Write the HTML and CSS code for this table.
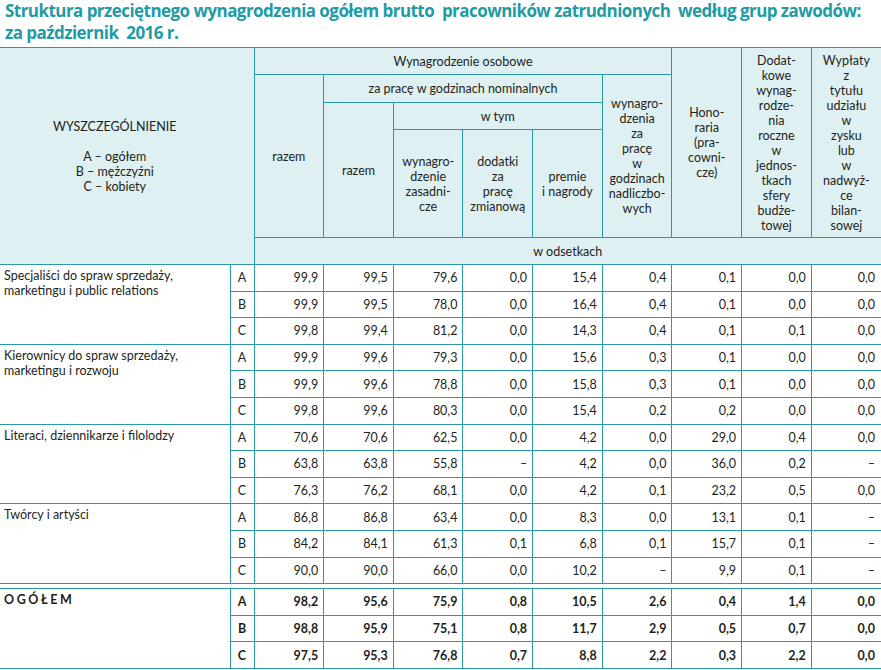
FILE: index.html
```html
<!DOCTYPE html>
<html lang="pl">
<head>
<meta charset="utf-8">
<title>Struktura przeciętnego wynagrodzenia</title>
<link rel="stylesheet" href="styles.css">
</head>
<body>
<h1 class="title">Struktura przeciętnego wynagrodzenia ogółem brutto&nbsp; pracowników zatrudnionych&nbsp; według grup zawodów:<br>za październik&nbsp; 2016 r.</h1>
<table class="tbl">
  <colgroup>
    <col class="c-label"><col class="c-abc">
    <col class="c-num"><col class="c-num"><col class="c-num"><col class="c-num"><col class="c-num"><col class="c-num"><col class="c-num"><col class="c-num"><col class="c-num">
  </colgroup>
  <thead>
    <tr class="h1">
      <th class="lead" colspan="2" rowspan="5">WYSZCZEGÓLNIENIE<br><br>A – ogółem<br>B – mężczyźni<br>C – kobiety</th>
      <th colspan="6">Wynagrodzenie osobowe</th>
      <th rowspan="4">Hono-<br>raria<br>(pra-<br>cowni-<br>cze)</th>
      <th rowspan="4">Dodat-<br>kowe<br>wynag-<br>rodze-<br>nia<br>roczne<br>w<br>jednos-<br>tkach<br>sfery<br>budże-<br>towej</th>
      <th rowspan="4" class="last">Wypłaty<br>z<br>tytułu<br>udziału<br>w<br>zysku<br>lub<br>w<br>nadwyż-<br>ce<br>bilan-<br>sowej</th>
    </tr>
    <tr class="h2">
      <th rowspan="3">razem</th>
      <th colspan="4">za pracę w godzinach nominalnych</th>
      <th rowspan="3">wynagro-<br>dzenia<br>za<br>pracę<br>w<br>godzinach<br>nadliczbo-<br>wych</th>
    </tr>
    <tr class="h3">
      <th rowspan="2">razem</th>
      <th colspan="3">w tym</th>
    </tr>
    <tr class="h4">
      <th>wynagro-<br>dzenie<br>zasadni-<br>cze</th>
      <th>dodatki<br>za<br>pracę<br>zmianową</th>
      <th>premie<br>i nagrody</th>
    </tr>
    <tr class="h5">
      <th colspan="9" class="last">w odsetkach</th>
    </tr>
  </thead>
  <tbody>
    <tr><td class="lbl" rowspan="3">Specjaliści do spraw sprzedaży,<br>marketingu i public relations</td><td class="abc">A</td><td>99,9</td><td>99,5</td><td>79,6</td><td>0,0</td><td>15,4</td><td>0,4</td><td>0,1</td><td>0,0</td><td class="last">0,0</td></tr>
    <tr><td class="abc">B</td><td>99,9</td><td>99,5</td><td>78,0</td><td>0,0</td><td>16,4</td><td>0,4</td><td>0,1</td><td>0,0</td><td class="last">0,0</td></tr>
    <tr><td class="abc">C</td><td>99,8</td><td>99,4</td><td>81,2</td><td>0,0</td><td>14,3</td><td>0,4</td><td>0,1</td><td>0,1</td><td class="last">0,0</td></tr>
    <tr><td class="lbl" rowspan="3">Kierownicy do spraw sprzedaży,<br>marketingu i rozwoju</td><td class="abc">A</td><td>99,9</td><td>99,6</td><td>79,3</td><td>0,0</td><td>15,6</td><td>0,3</td><td>0,1</td><td>0,0</td><td class="last">0,0</td></tr>
    <tr><td class="abc">B</td><td>99,9</td><td>99,6</td><td>78,8</td><td>0,0</td><td>15,8</td><td>0,3</td><td>0,1</td><td>0,0</td><td class="last">0,0</td></tr>
    <tr><td class="abc">C</td><td>99,8</td><td>99,6</td><td>80,3</td><td>0,0</td><td>15,4</td><td>0,2</td><td>0,2</td><td>0,0</td><td class="last">0,0</td></tr>
    <tr><td class="lbl" rowspan="3">Literaci, dziennikarze i filolodzy</td><td class="abc">A</td><td>70,6</td><td>70,6</td><td>62,5</td><td>0,0</td><td>4,2</td><td>0,0</td><td>29,0</td><td>0,4</td><td class="last">0,0</td></tr>
    <tr><td class="abc">B</td><td>63,8</td><td>63,8</td><td>55,8</td><td>–</td><td>4,2</td><td>0,0</td><td>36,0</td><td>0,2</td><td class="last">–</td></tr>
    <tr><td class="abc">C</td><td>76,3</td><td>76,2</td><td>68,1</td><td>0,0</td><td>4,2</td><td>0,1</td><td>23,2</td><td>0,5</td><td class="last">0,0</td></tr>
    <tr><td class="lbl" rowspan="3">Twórcy i artyści</td><td class="abc">A</td><td>86,8</td><td>86,8</td><td>63,4</td><td>0,0</td><td>8,3</td><td>0,0</td><td>13,1</td><td>0,1</td><td class="last">–</td></tr>
    <tr><td class="abc">B</td><td>84,2</td><td>84,1</td><td>61,3</td><td>0,1</td><td>6,8</td><td>0,1</td><td>15,7</td><td>0,1</td><td class="last">–</td></tr>
    <tr class="pre-total"><td class="abc">C</td><td>90,0</td><td>90,0</td><td>66,0</td><td>0,0</td><td>10,2</td><td>–</td><td>9,9</td><td>0,1</td><td class="last">–</td></tr>
    <tr class="gap"><td colspan="11" class="last"></td></tr>
    <tr class="total"><td class="lbl total-lbl" rowspan="3">OGÓŁEM</td><td class="abc">A</td><td>98,2</td><td>95,6</td><td>75,9</td><td>0,8</td><td>10,5</td><td>2,6</td><td>0,4</td><td>1,4</td><td class="last">0,0</td></tr>
    <tr class="total"><td class="abc">B</td><td>98,8</td><td>95,9</td><td>75,1</td><td>0,8</td><td>11,7</td><td>2,9</td><td>0,5</td><td>0,7</td><td class="last">0,0</td></tr>
    <tr class="total"><td class="abc">C</td><td>97,5</td><td>95,3</td><td>76,8</td><td>0,7</td><td>8,8</td><td>2,2</td><td>0,3</td><td>2,2</td><td class="last">0,0</td></tr>
  </tbody>
</table>
</body>
</html>
```
FILE: styles.css
```css
html, body {
  margin: 0;
  padding: 0;
  background: #ffffff;
}
body {
  font-family: "Lato", "Open Sans", sans-serif;
  color: #231f20;
  width: 881px;
  overflow: hidden;
}
.title {
  margin: 0;
  padding: 0 0 0 5px;
  height: 47px;
  font-family: "Open Sans", "Noto Sans", sans-serif;
  font-size: 17px;
  line-height: 22px;
  font-weight: 700;
  letter-spacing: -0.55px;
  color: #1f9ba4;
  white-space: nowrap;
}
.tbl {
  border-collapse: collapse;
  table-layout: fixed;
  width: 881px;
  font-size: 12.5px;
}
.c-label { width: 230px; }
.c-abc { width: 24px; }
.tbl th, .tbl td {
  border: 1px solid #2a9aa6;
  padding: 0;
  line-height: 15px;
}
.tbl th {
  background: #dff0f3;
  font-weight: 400;
  text-align: center;
  vertical-align: middle;
}
.tbl .lead { border-left: none; padding-right: 24px; }
.tbl .last { border-right: none; }
.h1 { height: 27px; }
.h2 { height: 28px; }
.h3 { height: 27px; }
.h4 { height: 108px; }
.h5 { height: 27px; }
.tbl td {
  text-align: right;
  padding-right: 5px;
  vertical-align: middle;
}
.tbl td.last { padding-right: 6px; }
.tbl tbody tr { height: 26.6px; }
.tbl td.lbl {
  text-align: left;
  vertical-align: top;
  padding: 3px 0 0 4px;
  border-left: none;
}
.tbl td.abc {
  text-align: center;
  padding: 0;
}
.tbl .gap { height: 5px; }
.tbl .gap td { border-left: none; border-right: none; padding: 0; height: 3px; }
.total td { font-weight: 700; }
.total-lbl { letter-spacing: 2.6px; }
```
